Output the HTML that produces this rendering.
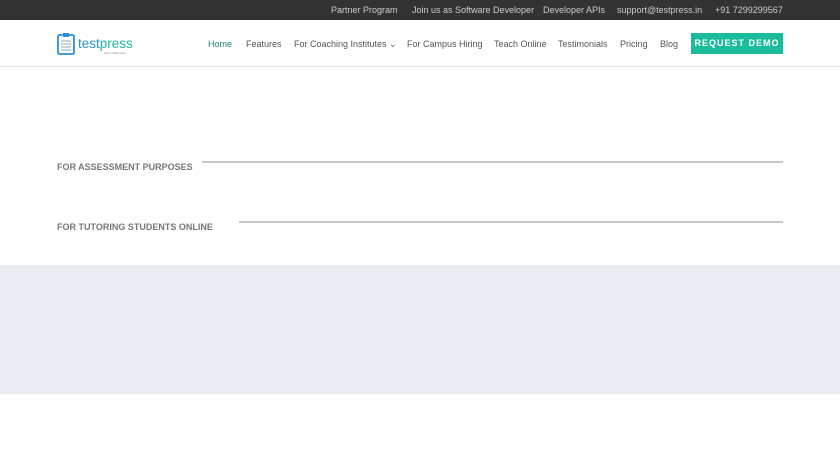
<!DOCTYPE html>
<html><head><style>
*{margin:0;padding:0;box-sizing:border-box}
body{width:840px;height:472px;background:#fff;font-family:"Liberation Sans",sans-serif;position:relative;overflow:hidden}
.a{position:absolute;white-space:nowrap}
.top{position:absolute;left:0;top:0;width:840px;height:20px;background:#333}
.top span{position:absolute;top:5px;font-size:9px;color:#ccc}
.nav span{position:absolute;top:39px;font-size:9px;color:#555}
</style></head><body>
<div class="top">
<span style="left:331px">Partner Program</span>
<span style="left:412px">Join us as Software Developer</span>
<span style="left:543px">Developer APIs</span>
<span style="left:617px">support@testpress.in</span>
<span style="left:715px">+91 7299299567</span>
</div>
<div class="a" style="left:0;top:66px;width:840px;height:1px;background:#e2e2e2"></div>
<svg class="a" style="left:57px;top:32px" width="18" height="23" viewBox="0 0 18 23"><rect x="1" y="3" width="16" height="19" rx="1.5" fill="#fff" stroke="#2a8fd6" stroke-width="1.8"/><rect x="6" y="1" width="6" height="4" fill="#2a8fd6"/><g stroke="#8ab" stroke-width="1"><line x1="4" y1="9" x2="14" y2="9"/><line x1="4" y1="12" x2="14" y2="12"/><line x1="4" y1="15" x2="14" y2="15"/><line x1="4" y1="18" x2="14" y2="18"/></g></svg>
<div class="a" style="left:78px;top:36px;font-size:13.5px;color:#2a8fd6">test<span style="color:#1abc9c">press</span></div>
<div class="a" style="left:104px;top:51px;font-size:3px;color:#888">tests made easy</div>
<div class="nav">
<span style="left:208px;color:#1f8a70">Home</span>
<span style="left:246px">Features</span>
<span style="left:294px">For Coaching Institutes ⌄</span>
<span style="left:407px">For Campus Hiring</span>
<span style="left:494px">Teach Online</span>
<span style="left:558px">Testimonials</span>
<span style="left:620px">Pricing</span>
<span style="left:660px">Blog</span>
</div>
<div class="a" style="left:691px;top:33px;width:92px;height:21px;background:#1abc9c;color:#fff;font-size:9px;font-weight:bold;letter-spacing:1px;text-align:center;line-height:21px">REQUEST DEMO</div>
<div class="a" style="left:57px;top:162px;font-size:9px;font-weight:bold;color:#777">FOR ASSESSMENT PURPOSES</div>
<div class="a" style="left:202px;top:161px;width:581px;height:2px;background:#c8c8c8"></div>
<div class="a" style="left:57px;top:222px;font-size:9px;font-weight:bold;color:#777">FOR TUTORING STUDENTS ONLINE</div>
<div class="a" style="left:239px;top:221px;width:544px;height:2px;background:#c8c8c8"></div>
<div class="a" style="left:0;top:265px;width:840px;height:129px;background:#e9ecf0"></div>
</body></html>
